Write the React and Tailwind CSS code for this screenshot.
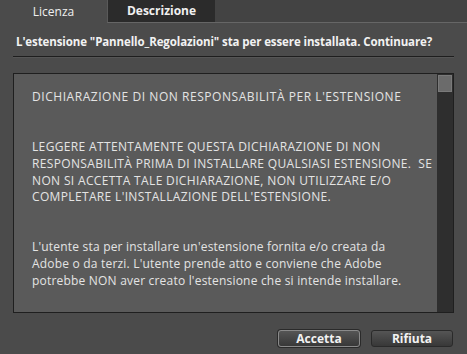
import React from 'react';

const bodyFont = { fontFamily: '"Open Sans", "DejaVu Sans", sans-serif' };

const Paragraph = ({ lines, className = '' }) => (
    <div className={className}>
        {lines.map((line, i) => (
            <div key={i} className="whitespace-pre leading-[16.7px]">{line}</div>
        ))}
    </div>
);

const App = () => {
    return (
        <div className="w-[467px] h-[354px] bg-[#4b4b4b] flex flex-col text-[#e8e8e8] overflow-hidden" style={bodyFont}>
            {/* tabs */}
            <div className="flex h-[23px] shrink-0">
                <div className="w-[107px] flex items-center justify-center text-[12px] text-[#f0f0f0] bg-[#4b4b4b]">
                    Licenza
                </div>
                <div className="w-[108px] flex items-center justify-center text-[12px] font-bold text-[#f0f0f0] bg-[#2b2b2b] border-l border-[#5a5a5a] border-b border-b-[#666666]">
                    Descrizione
                </div>
                <div className="flex-1 bg-[#434343] border-b border-[#666666]" />
            </div>

            {/* header */}
            <div className="px-[16px] mt-[11px] text-[11.5px] tracking-[-0.1px] font-bold leading-[16px] text-[#f2f2f2] whitespace-nowrap">
                L'estensione "Pannello_Regolazioni" sta per essere installata. Continuare?
            </div>
            <div className="mx-[13px] mt-[6px] h-px bg-[#1e1e1e] shadow-[0_1px_0_#555555]" />

            {/* licence box */}
            <div className="mx-[13px] mt-[16px] h-[240px] border border-[#1f1f1f] bg-[#5a5a5a] flex">
                <div className="flex-1 pt-[15px] pl-[18px] text-[12px] text-[#e4e4e4] overflow-hidden">
                    <Paragraph className="tracking-[0.55px]" lines={["DICHIARAZIONE DI NON RESPONSABILITÀ PER L'ESTENSIONE"]} />
                    <Paragraph
                        className="mt-[33.4px] tracking-[0.35px]"
                        lines={[
                            'LEGGERE ATTENTAMENTE QUESTA DICHIARAZIONE DI NON',
                            'RESPONSABILITÀ PRIMA DI INSTALLARE QUALSIASI ESTENSIONE.  SE',
                            'NON SI ACCETTA TALE DICHIARAZIONE, NON UTILIZZARE E/O',
                            "COMPLETARE L'INSTALLAZIONE DELL'ESTENSIONE.",
                        ]}
                    />
                    <Paragraph
                        className="mt-[33.4px] tracking-[0.2px]"
                        lines={[
                            "L'utente sta per installare un'estensione fornita e/o creata da",
                            "Adobe o da terzi. L'utente prende atto e conviene che Adobe",
                            "potrebbe NON aver creato l'estensione che si intende installare.",
                        ]}
                    />
                </div>
                <div className="w-[16px] bg-[#2e2e2e] pt-[1px] px-[1px] shrink-0">
                    <div className="h-[17px] bg-[#6b6b6b] border border-[#7a7a7a]" />
                </div>
            </div>

            {/* buttons */}
            <div className="flex justify-end gap-[11px] pr-[14px] mt-[17px]">
                <button className="w-[82px] h-[17px] rounded-[3px] border border-[#8a8a8a] bg-gradient-to-b from-[#555555] to-[#383838] shadow-[0_0_0_1px_#2a2a2a] text-[12px] font-bold text-[#f2f2f2] leading-none">
                    Accetta
                </button>
                <button className="w-[82px] h-[17px] rounded-[3px] border border-[#2a2a2a] bg-gradient-to-b from-[#555555] to-[#383838] text-[12px] font-bold text-[#f2f2f2] leading-none">
                    Rifiuta
                </button>
            </div>
        </div>
    );
};

export default App;
